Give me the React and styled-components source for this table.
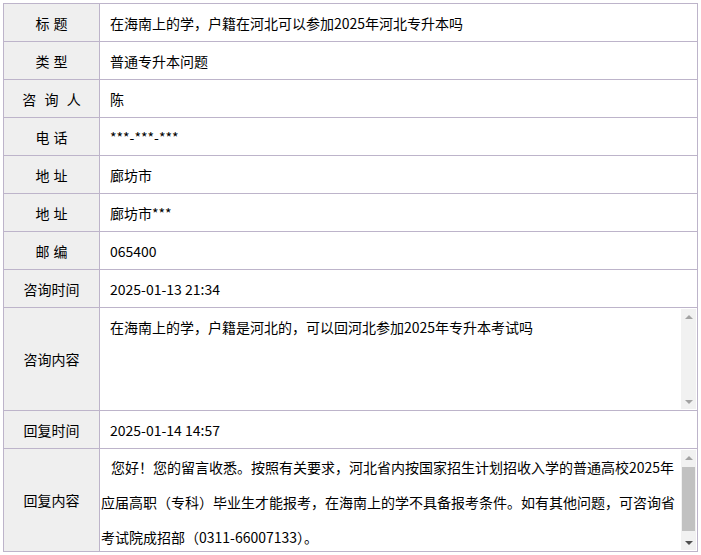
import React from "react";
import styled, { createGlobalStyle } from "styled-components";

const GlobalStyle = createGlobalStyle`
  html, body {
    margin: 0;
    padding: 0;
    background: #fff;
  }
  body {
    font-family: "Noto Sans CJK SC", "Noto Sans", sans-serif;
    font-size: 14px;
    color: #000;
  }
`;

const rows = [
  { label: "标 题", value: "在海南上的学，户籍在河北可以参加2025年河北专升本吗" },
  { label: "类 型", value: "普通专升本问题" },
  { label: "咨  询  人", value: "陈" },
  { label: "电 话", value: "***-***-***" },
  { label: "地 址", value: "廊坊市" },
  { label: "地 址", value: "廊坊市***" },
  { label: "邮 编", value: "065400" },
  { label: "咨询时间", value: "2025-01-13 21:34" },
  {
    label: "咨询内容",
    area: "question",
    value: "在海南上的学，户籍是河北的，可以回河北参加2025年专升本考试吗",
  },
  { label: "回复时间", value: "2025-01-14 14:57" },
  {
    label: "回复内容",
    area: "reply",
    value:
      "您好！您的留言收悉。按照有关要求，河北省内按国家招生计划招收入学的普通高校2025年应届高职（专科）毕业生才能报考，在海南上的学不具备报考条件。如有其他问题，可咨询省考试院成招部（0311-66007133）。",
  },
];

/* the page's own scrollbar drawing (the browser hides native ones) */
const ScrollBar = ({ thumb }) => (
  <Bar>
    <ArrowBtn>
      <Arrow $up $off />
    </ArrowBtn>
    <Track>{thumb && <Thumb style={{ height: thumb }} />}</Track>
    <ArrowBtn>
      <Arrow $off={!thumb} />
    </ArrowBtn>
  </Bar>
);

const App = () => {
  return (
    <>
      <GlobalStyle />
      <Page>
        <Sheet>
          {rows.map((row, i) => (
            <React.Fragment key={i}>
              <LabelCell $tall={!!row.area}>{row.label}</LabelCell>
              {row.area === "question" && (
                <ValueCell $tall>
                  <QuestionArea readOnly defaultValue={row.value} />
                  <ScrollBar />
                </ValueCell>
              )}
              {row.area === "reply" && (
                <ValueCell $tall>
                  <ReplyArea readOnly defaultValue={row.value} />
                  <ScrollBar thumb="92%" />
                </ValueCell>
              )}
              {!row.area && <ValueCell>{row.value}</ValueCell>}
            </React.Fragment>
          ))}
        </Sheet>
      </Page>
    </>
  );
};

export default App;

const Page = styled.div`
  padding: 3px;
`;

const Sheet = styled.div`
  width: 695px;
  box-sizing: border-box;
  display: grid;
  grid-template-columns: 95px 1fr;
  gap: 1px;
  padding: 1px;
  background: #bdb4ca;
`;

const LabelCell = styled.div`
  background: #efefef;
  height: ${(p) => (p.$tall ? "102px" : "37px")};
  display: flex;
  align-items: center;
  justify-content: center;
  white-space: pre;
  word-spacing: 1px;
`;

const ValueCell = styled.div`
  position: relative;
  background: #fff;
  height: ${(p) => (p.$tall ? "102px" : "37px")};
  display: flex;
  align-items: center;
  padding: ${(p) => (p.$tall ? "0" : "0 10px")};
  box-sizing: border-box;
`;

const BaseArea = styled.textarea`
  width: 100%;
  height: 100%;
  box-sizing: border-box;
  border: 1px solid #fff;
  outline: none;
  resize: none;
  overflow: hidden;
  font-family: "Noto Sans CJK SC", "Noto Sans", sans-serif;
  font-size: 14px;
  color: #000;
  background: #fff;
  margin: 0;
`;

const QuestionArea = styled(BaseArea)`
  padding: 8px 24px 8px 9px;
  line-height: 20px;
`;

const ReplyArea = styled(BaseArea)`
  padding: 0 15px 0 0;
  line-height: 35px;
  text-indent: 10px;
`;

const Bar = styled.div`
  position: absolute;
  top: 1px;
  right: 1px;
  bottom: 1px;
  width: 15px;
  background: #f1f1f1;
  display: flex;
  flex-direction: column;
`;

const ArrowBtn = styled.div`
  height: 15px;
  flex: none;
  display: flex;
  align-items: center;
  justify-content: center;
`;

const Arrow = styled.div`
  width: 0;
  height: 0;
  border-left: 4px solid transparent;
  border-right: 4px solid transparent;
  ${(p) => (p.$up ? "border-bottom" : "border-top")}: 4px solid
    ${(p) => (p.$off ? "#a3a3a3" : "#505050")};
`;

const Track = styled.div`
  flex: 1;
  padding: 0 1px;
`;

const Thumb = styled.div`
  background: #c1c1c1;
  margin-top: 2px;
`;
